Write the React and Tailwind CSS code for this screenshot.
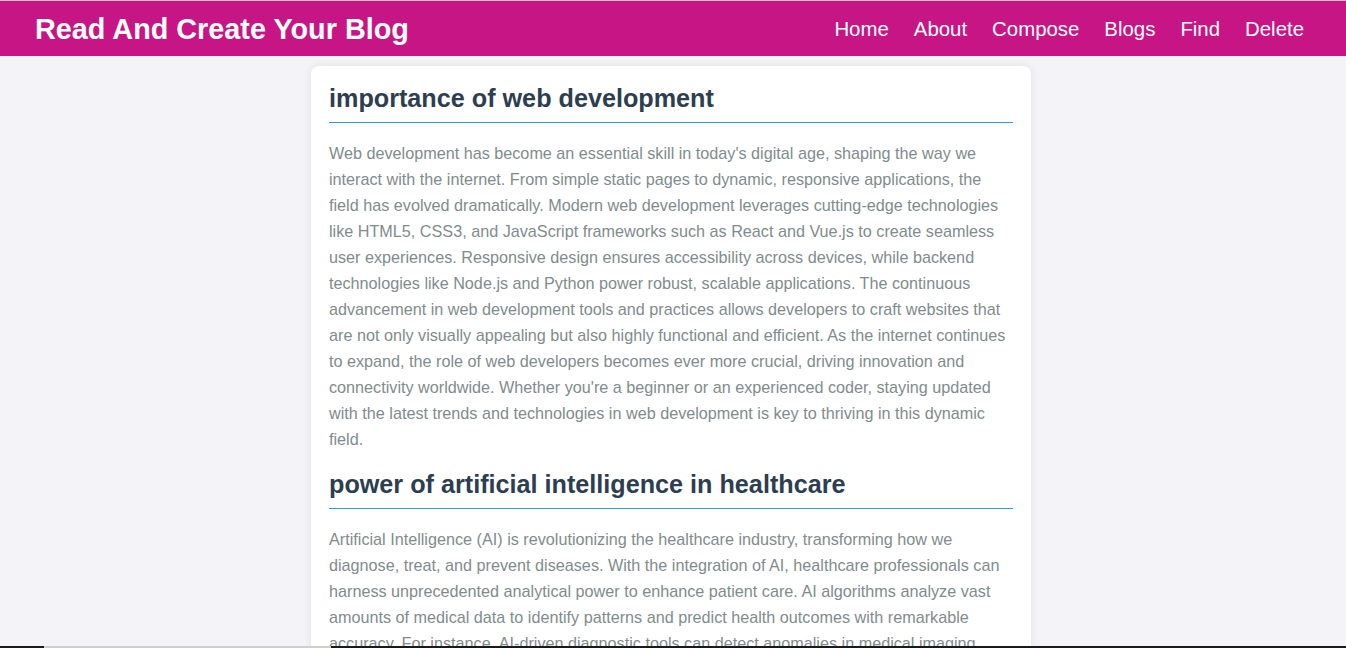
import React from 'react';

const posts = [
  {
    title: 'importance of web development',
    body: "Web development has become an essential skill in today's digital age, shaping the way we interact with the internet. From simple static pages to dynamic, responsive applications, the field has evolved dramatically. Modern web development leverages cutting-edge technologies like HTML5, CSS3, and JavaScript frameworks such as React and Vue.js to create seamless user experiences. Responsive design ensures accessibility across devices, while backend technologies like Node.js and Python power robust, scalable applications. The continuous advancement in web development tools and practices allows developers to craft websites that are not only visually appealing but also highly functional and efficient. As the internet continues to expand, the role of web developers becomes ever more crucial, driving innovation and connectivity worldwide. Whether you're a beginner or an experienced coder, staying updated with the latest trends and technologies in web development is key to thriving in this dynamic field.",
  },
  {
    title: 'power of artificial intelligence in healthcare',
    body: 'Artificial Intelligence (AI) is revolutionizing the healthcare industry, transforming how we diagnose, treat, and prevent diseases. With the integration of AI, healthcare professionals can harness unprecedented analytical power to enhance patient care. AI algorithms analyze vast amounts of medical data to identify patterns and predict health outcomes with remarkable accuracy. For instance, AI-driven diagnostic tools can detect anomalies in medical imaging faster and more precisely than ever before, enabling earlier interventions and better outcomes for patients around the world.',
  },
];

const links = ['Home', 'About', 'Compose', 'Blogs', 'Find', 'Delete'];

export default function App() {
  return (
    <div className="min-h-screen bg-[#f3f3f8] font-['Liberation_Sans',Arial,sans-serif] border-t border-[#c4c4c4]">
      <header className="h-[55px] bg-[#c71585] flex items-center justify-between pl-[35px] pr-[42px] pt-[2px]">
        <h1 className="text-white text-[28.8px] font-bold">Read And Create Your Blog</h1>
        <nav className="flex gap-[25px] text-white text-[20.4px]">
          {links.map((l) => (
            <a key={l} href="#">{l}</a>
          ))}
        </nav>
      </header>

      <main className="pt-[10px] pr-[4px]">
        <div className="w-[720px] mx-auto bg-white rounded-lg shadow-[0_0_10px_rgba(0,0,0,0.08)] px-[18px] pt-[18px] pb-[18px]">
          {posts.map((p) => (
            <article key={p.title}>
              <h2 className="text-[25.2px] font-bold text-[#2c3e50] leading-[28px] pb-[10px] border-b border-[#3498db]">
                {p.title}
              </h2>
              <p className="mt-[17px] mb-[18px] text-[16.2px] leading-[26px] text-[#7f8c8d]">{p.body}</p>
            </article>
          ))}
        </div>
      </main>

      <div className="fixed bottom-0 left-0 right-0 h-[2px] flex">
        <div className="w-[44px] bg-[#1a1a1a]" />
        <div className="w-[287px] bg-[#cfcfcf]" />
        <div className="flex-1 bg-[#1a1a1a]" />
      </div>
    </div>
  );
}
